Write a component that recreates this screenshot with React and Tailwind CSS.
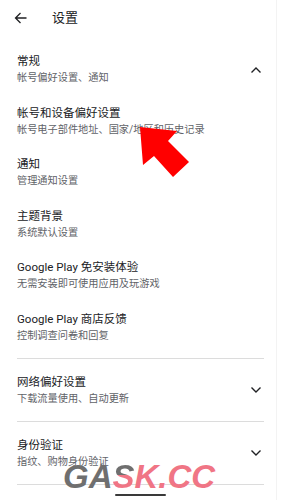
import React from "react";

const items = [
  ["帐号和设备偏好设置", "帐号电子部件地址、国家/地区和历史记录"],
  ["通知", "管理通知设置"],
  ["主题背景", "系统默认设置"],
  ["Google Play 免安装体验", "无需安装即可使用应用及玩游戏"],
  ["Google Play 商店反馈", "控制调查问卷和回复"],
];

function Chevron({ up }) {
  return (
    <svg width="12" height="8" viewBox="0 0 12 8" className="shrink-0">
      <path
        d={up ? "M1.5 6.5 L6 2 L10.5 6.5" : "M1.5 1.5 L6 6 L10.5 1.5"}
        fill="none"
        stroke="#202124"
        strokeWidth="1.4"
      />
    </svg>
  );
}

function Item({ title, sub, chevron }) {
  return (
    <div className="flex items-center justify-between h-full pl-[17px] pr-[19px]">
      <div className="flex flex-col">
        <div className="text-[11.5px] leading-[16px] text-[#202124]">{title}</div>
        <div className="text-[10.2px] leading-[16px] text-[#5f6368] mt-[1px]">{sub}</div>
      </div>
      {chevron}
    </div>
  );
}

export default function App() {
  return (
    <div
      className="relative w-[281px] h-[500px] bg-white overflow-hidden"
      style={{ fontFamily: "Roboto, 'Noto Sans CJK SC', sans-serif" }}
    >
      <div className="absolute top-0 bottom-0 left-[276px] w-px bg-[#f3f3f3]" />
      {/* header */}
      <div className="flex items-center h-[36px] pl-[14px]">
        <svg width="13" height="12" viewBox="0 0 13 12">
          <path d="M12.5 6 H1.5 M6.5 1 L1.5 6 L6.5 11" fill="none" stroke="#202124" strokeWidth="1.3" />
        </svg>
        <div className="ml-[25px] text-[13px] text-[#202124]">设置</div>
      </div>
      <div className="h-[8px]" />
      <div className="h-[51.5px]">
        <Item title="常规" sub="帐号偏好设置、通知" chevron={<Chevron up />} />
      </div>
      {items.map(([t, s]) => (
        <div key={t} className="h-[51.5px]">
          <Item title={t} sub={s} />
        </div>
      ))}
      <div className="h-[5px]" />
      <div className="mx-[17px] w-[247px] h-px bg-[#dcdcdc]" />
      <div className="h-[62px]">
        <Item title="网络偏好设置" sub="下载流量使用、自动更新" chevron={<Chevron />} />
      </div>
      <div className="mx-[17px] w-[247px] h-px bg-[#dcdcdc]" />
      <div className="h-[62px]">
        <Item title="身份验证" sub="指纹、购物身份验证" chevron={<Chevron />} />
      </div>
      <div className="mx-[17px] w-[247px] h-px bg-[#dcdcdc]" />
      <div className="flex justify-center mt-[9px]">
        <div className="w-[51px] h-[2px] bg-[#3a3a3a] rounded-full" />
      </div>

      {/* red arrow overlay */}
      <svg className="absolute left-0 top-0 pointer-events-none" width="281" height="500">
        <polygon
          points="140,127 177,131 168,141 189,162 173,177 154,156 143,165"
          fill="#ff0000"
        />
      </svg>

      {/* watermark */}
      <div
        className="absolute left-[63px] top-[460px] text-[33px] font-bold italic leading-none pointer-events-none"
        style={{ fontFamily: "'Liberation Sans', Arial, sans-serif" }}
      >
        <span className="text-[#6f6f6f]">GA</span>
        <span className="bg-[linear-gradient(to_bottom,#6f6f6f_45%,#f07585_45%)] bg-clip-text text-transparent">S</span>
        <span className="text-[#f07585]">K.CC</span>
      </div>
    </div>
  );
}
